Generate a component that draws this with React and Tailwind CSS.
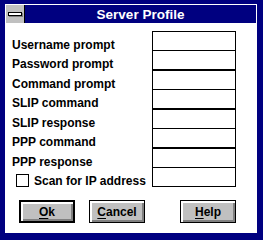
import React from "react";

const rows = [
  { label: "Username prompt", h: "h-[19px]" },
  { label: "Password prompt", h: "h-[20px]" },
  { label: "Command prompt", h: "h-[19px]" },
  { label: "SLIP command", h: "h-[20px]" },
  { label: "SLIP response", h: "h-[19px]" },
  { label: "PPP command", h: "h-[20px]" },
  { label: "PPP response", h: "h-[19px]" },
];

function Button({ first, rest, isDefault, className }) {
  return (
    <div
      className={
        "w-[56px] h-[23px] bg-[#c0c0c0] border-black flex items-center justify-center text-[12px] font-bold text-black leading-[12px] shadow-[inset_1px_1px_0_#ffffff,inset_2px_2px_0_#ffffff,inset_-1px_-1px_0_#808080,inset_-2px_-2px_0_#808080] " +
        (isDefault ? "border-2 " : "border ") +
        (className || "")
      }
    >
      <span>
        <span className="underline underline-offset-[2px]">{first}</span>
        {rest}
      </span>
    </div>
  );
}

export default function App() {
  return (
    <div className="w-[263px] h-[240px] bg-[#000080] pt-[4px] pl-[5px] pr-[6px] pb-[7px] font-['Liberation_Sans',Arial,sans-serif] text-black">
      <div className="h-full bg-white flex flex-col">
        {/* title bar */}
        <div className="mx-[1px] mt-[1px] h-[18px] flex">
          <div className="w-[18px] h-full bg-[#c0c0c0] flex items-center justify-center">
            <div className="w-[14px] h-[4px] bg-white border border-black shadow-[1px_1px_0_#808080]" />
          </div>
          <div className="w-[1px] h-full bg-black" />
          <div className="flex-1 h-full bg-[#000080] flex items-center justify-center text-white font-bold text-[13.5px] leading-[14px] pt-[1px]">
            Server Profile
          </div>
        </div>

        {/* fields */}
        <div className="mt-[8px] flex flex-col pl-[7px] pr-[21px]">
          {rows.map((r) => (
            <div key={r.label} className={"flex items-start " + r.h}>
              <div className="flex-1 pt-[8px] text-[12px] leading-[12px] font-bold whitespace-nowrap">
                {r.label}
              </div>
              <div className="w-[84px] h-[20px] shrink-0 border border-black bg-white" />
            </div>
          ))}
          <div className="flex items-start h-[20px]">
            <div className="flex-1 flex items-start">
              <div className="ml-[4px] mt-[7px] w-[13px] h-[13px] border border-black bg-white shrink-0" />
              <div className="ml-[5px] pt-[8px] text-[12px] leading-[12px] font-bold whitespace-nowrap">
                Scan for IP address
              </div>
            </div>
            <div className="w-[84px] h-[20px] shrink-0 border border-black bg-white" />
          </div>
        </div>

        {/* buttons */}
        <div className="mt-[13px] flex pl-[14px]">
          <Button first="O" rest="k" isDefault />
          <Button first="C" rest="ancel" className="ml-[14px]" />
          <Button first="H" rest="elp" className="ml-[35px]" />
        </div>
      </div>
    </div>
  );
}
